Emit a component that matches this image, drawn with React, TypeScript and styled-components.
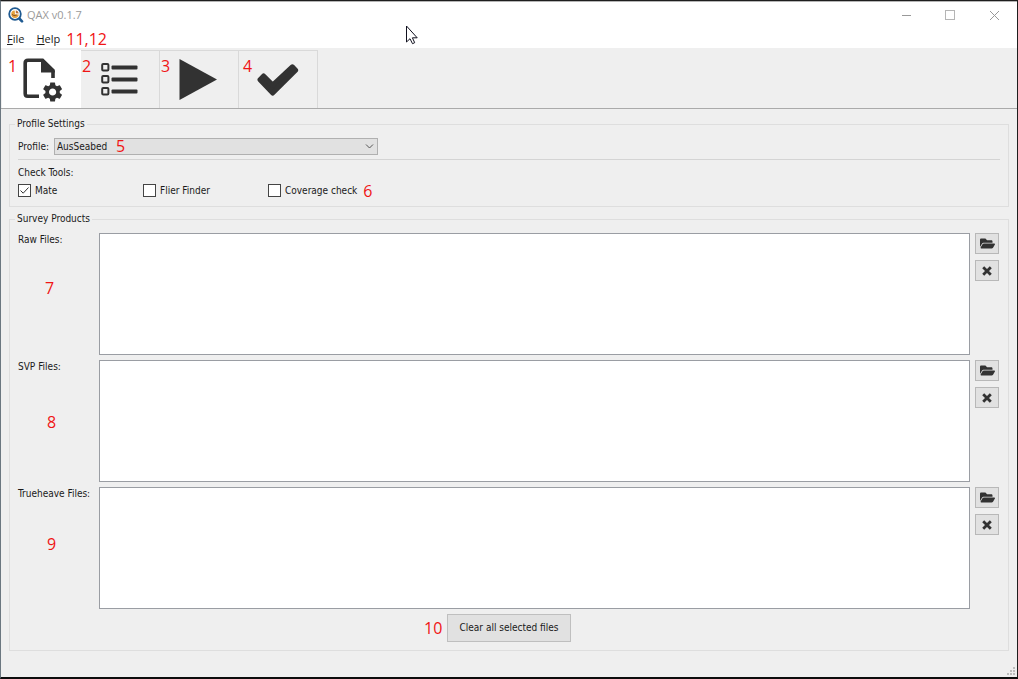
import React from "react";
import styled, { createGlobalStyle } from "styled-components";
import { FaFolderOpen } from "react-icons/fa";

const ink = "#323232";

const GlobalStyle = createGlobalStyle`
  *, *::before, *::after { box-sizing: border-box; }
  body {
    margin: 0;
    background: #efefef;
    color: #1a1a1a;
    font-family: "DejaVu Sans Condensed", "DejaVu Sans", sans-serif;
    font-size: 10px;
    line-height: 12px;
  }
  button, select, textarea, input { font: inherit; color: inherit; }
`;

const Window = styled.div`
  position: relative;
  display: flex;
  flex-direction: column;
  min-height: 100vh;
  background: #efefef;
  border: 1px solid #1e1e1e;
  border-left-color: #6b7780;
  border-bottom-width: 2px;
  border-bottom-color: #0c0c0c;
`;

const TopBar = styled.header`
  display: flex;
  align-items: center;
  height: 29px;
  padding: 0 17px 2px 7px;
  border-top: 1px solid #b5b5b5;
  background: #ffffff;
  color: #9a9a9a;
  font-family: "Open Sans", sans-serif;
  font-size: 11px;
`;

const Title = styled.h1`
  flex: 1;
  margin: 0 0 0 3px;
  font-size: 11px;
  font-weight: 400;
`;

const WindowButtons = styled.div`
  display: flex;
  gap: 32px;
`;

const WindowButton = styled.button`
  display: flex;
  padding: 0;
  border: 0;
  background: none;
`;

const Menu = styled.nav`
  display: flex;
  align-items: center;
  gap: 12px;
  height: 18px;
  padding-left: 6px;
  background: #ffffff;
  font-family: "Open Sans", sans-serif;
  font-size: 11px;
`;

const MenuItem = styled.button`
  padding: 0;
  border: 0;
  background: none;
  line-height: 16px;

  &::first-letter { text-decoration: underline; }
`;

const Marker = styled.span`
  color: #f01414;
  font-family: "Open Sans", sans-serif;
  font-size: 16px;
  line-height: 16px;
`;

const MenuMarker = styled(Marker)`
  margin-left: -6px;
`;

const FloatingMarker = styled(Marker)<{ $left: number; $top: number }>`
  position: absolute;
  left: ${(p) => p.$left}px;
  top: ${(p) => p.$top}px;
  pointer-events: none;
`;

const TabBar = styled.div`
  display: flex;
  height: 61px;
  padding: 2px 0 0 1px;
  border-bottom: 1px solid #aaaaaa;
`;

const Tab = styled.button<{ $active?: boolean }>`
  position: relative;
  display: flex;
  align-items: center;
  justify-content: center;
  width: 79px;
  padding: 0;
  border: 0;
  border-top: 1px solid ${(p) => (p.$active ? "#ffffff" : "#d9d9d9")};
  border-right: 1px solid ${(p) => (p.$active ? "#ffffff" : "#d9d9d9")};
  background: ${(p) => (p.$active ? "#ffffff" : "#efefef")};
`;

const Content = styled.main`
  flex: 1;
  display: flex;
  flex-direction: column;
  gap: 6px;
  padding: 9px 8px 26px;
`;

const Group = styled.fieldset<{ $grow?: boolean }>`
  display: flex;
  flex-direction: column;
  flex: ${(p) => (p.$grow ? "1" : "none")};
  min-width: 0;
  margin: 0;
  padding: ${(p) => (p.$grow ? "8px 8px 7px" : "8px")};
  border: 1px solid #dedede;
`;

const Legend = styled.legend`
  margin-left: -3px;
  padding: 0 2px;
`;

const ProfileRow = styled.div`
  position: relative;
  display: flex;
  align-items: center;
  gap: 5px;
`;

const SelectBox = styled.div`
  position: relative;
  display: flex;
  width: 324px;

  svg {
    position: absolute;
    right: 4px;
    top: 5px;
    pointer-events: none;
  }
`;

const Select = styled.select`
  appearance: none;
  width: 100%;
  height: 17px;
  padding: 0 2px;
  border: 1px solid #b0b0b0;
  border-radius: 0;
  background: #e1e1e1;
`;

const Divider = styled.hr`
  width: 100%;
  margin: 4px 0 7px;
  border: 0;
  border-top: 1px solid #d4d4d4;
`;

const CheckRow = styled.div`
  display: flex;
  align-items: center;
  height: 15px;
  margin-top: 4px;
`;

const CheckLabel = styled.label<{ $last?: boolean }>`
  display: flex;
  align-items: center;
  gap: 4px;
  width: ${(p) => (p.$last ? "auto" : "125px")};
  margin-right: ${(p) => (p.$last ? "6px" : "0")};
`;

const CheckBox = styled.input`
  appearance: none;
  width: 13px;
  height: 13px;
  margin: 0;
  border: 1px solid #444444;
  background: #ffffff;

  &:checked {
    background: #ffffff
      url("data:image/svg+xml,%3Csvg xmlns='http://www.w3.org/2000/svg' viewBox='0 0 11 11'%3E%3Cpath d='M1.5 5.5 4.2 8.2 9.5 2.5' fill='none' stroke='%23333'/%3E%3C/svg%3E");
  }
`;

const FileRows = styled.div`
  display: flex;
  flex-direction: column;
  gap: 5px;
`;

const FileRow = styled.div`
  position: relative;
  display: flex;
  min-height: max(80px, calc((100vh - 313px) / 3));
`;

const FileLabel = styled.label`
  width: 81px;
  padding-top: 1px;
`;

const FileList = styled.textarea`
  flex: 1;
  min-width: 0;
  border: 1px solid #9a9da3;
  border-radius: 0;
  background: #ffffff;
  resize: none;
  outline: none;
`;

const RowButtons = styled.div`
  display: flex;
  flex-direction: column;
  gap: 6px;
  padding: 0 1px 0 5px;
`;

const IconButton = styled.button`
  display: flex;
  align-items: center;
  justify-content: center;
  width: 24px;
  height: 21px;
  padding: 0;
  border: 1px solid #b8b8b8;
  background: #e1e1e1;
  color: ${ink};
`;

const Actions = styled.div`
  display: flex;
  justify-content: center;
  padding-top: 5px;
`;

const ClearWrap = styled.div`
  position: relative;
`;

const ClearButton = styled.button`
  width: 124px;
  height: 28px;
  padding: 0;
  border: 1px solid #bfbfbf;
  background: #e1e1e1;
`;

const Cursor = styled.svg`
  position: absolute;
  left: 404px;
  top: 24px;
  pointer-events: none;
`;

const Grip = styled.svg`
  position: absolute;
  right: 2px;
  bottom: 2px;
`;

const Logo = () => (
  <svg width="16" height="16" viewBox="0 0 16 16" aria-hidden="true">
    <path d="M11.3 11.5 14 14.4" stroke="#1f5a91" strokeWidth="2.6" strokeLinecap="round" />
    <circle cx="7" cy="7" r="5.8" fill="#ffffff" stroke="#1f5a91" strokeWidth="1.8" />
    <path d="M6.7 3.4A3.8 3.8 0 1 0 10.8 7.6L7 7.2Z" fill="#e5a23d" />
    <path d="M7.8 3.2a3.8 3.8 0 0 1 3 3.4l-3-.4Z" fill="#b9713a" />
    <path d="M4 7.4 6 8.6l2.8-.5" fill="none" stroke="#8c5528" />
  </svg>
);

const FileGearIcon = () => (
  <svg width="44" height="46" viewBox="19 57 44 46" aria-hidden="true">
    <path d="M39 96.2H27.8Q25.2 96.2 25.2 93.5V63Q25.2 60.2 28 60.2H42.5L53 70.5V78" fill="none" stroke={ink} strokeWidth="3.6" />
    <path d="M41 60H43.5L54.8 71V72.6H41Z" fill={ink} />
    <g transform="translate(40.6 80)">
      <path
        fill={ink}
        d="M19.14 12.94c.04-.3.06-.61.06-.94 0-.32-.02-.64-.07-.94l2.03-1.58a.49.49 0 0 0 .12-.61l-1.92-3.32a.488.488 0 0 0-.59-.22l-2.39.96c-.5-.38-1.03-.7-1.62-.94l-.36-2.54a.484.484 0 0 0-.48-.41h-3.84c-.24 0-.43.17-.47.41l-.36 2.54c-.59.24-1.13.57-1.62.94l-2.39-.96c-.22-.08-.47 0-.59.22L2.74 8.87c-.12.21-.08.47.12.61l2.03 1.58c-.05.3-.09.63-.09.94s.02.64.07.94l-2.03 1.58a.49.49 0 0 0-.12.61l1.92 3.32c.12.22.37.29.59.22l2.39-.96c.5.38 1.03.7 1.62.94l.36 2.54c.05.24.24.41.48.41h3.84c.24 0 .44-.17.47-.41l.36-2.54c.59-.24 1.13-.56 1.62-.94l2.39.96c.22.08.47 0 .59-.22l1.92-3.32c.12-.22.07-.47-.12-.61l-2.01-1.58zM12 15.6c-1.98 0-3.6-1.62-3.6-3.6s1.62-3.6 3.6-3.6 3.6 1.62 3.6 3.6-1.62 3.6-3.6 3.6z"
      />
    </g>
  </svg>
);

const ListIcon = () => (
  <svg width="38" height="34" viewBox="0 0 38 34" aria-hidden="true">
    {[1, 13, 25].map((y) => (
      <g key={y}>
        <rect x="1.2" y={y} width="6.2" height="6.6" rx="1" fill="none" stroke={ink} strokeWidth="2" />
        <rect x="10.5" y={y + 1.4} width="26" height="4" rx="1" fill={ink} />
      </g>
    ))}
  </svg>
);

const PlayIcon = () => (
  <svg width="40" height="42" viewBox="0 0 40 42" aria-hidden="true">
    <path d="M.5 0 38 20.5 .5 41Z" fill={ink} />
  </svg>
);

const CheckIcon = () => (
  <svg width="42" height="34" viewBox="257 63 42 34" aria-hidden="true">
    <path
      d="M260 79.7 263.6 76 272.7 85 292.3 66.8 295.6 70.3 272.7 93Z"
      fill={ink}
      stroke={ink}
      strokeWidth="5"
      strokeLinejoin="round"
    />
  </svg>
);

const CrossIcon = () => (
  <svg width="10" height="10" viewBox="0 0 10 10" aria-hidden="true">
    <path d="M2.2 2.2 7.8 7.8M7.8 2.2 2.2 7.8" stroke={ink} strokeWidth="2.8" strokeLinecap="square" />
  </svg>
);

const tabs = [
  { name: "Inputs", marker: "1", left: 6, icon: <FileGearIcon /> },
  { name: "Checks", marker: "2", left: 1, icon: <ListIcon /> },
  { name: "Run", marker: "3", left: 1, icon: <PlayIcon /> },
  { name: "Results", marker: "4", left: 4, icon: <CheckIcon /> },
];

const fileRows = [
  { id: "raw", label: "Raw Files:", marker: "7", left: 27, top: 47 },
  { id: "svp", label: "SVP Files:", marker: "8", left: 29, top: 54 },
  { id: "trueheave", label: "Trueheave Files:", marker: "9", left: 29, top: 49 },
];

export default function App() {
  return (
    <>
      <GlobalStyle />
      <Window>
        <TopBar>
          <Logo />
          <Title>QAX v0.1.7</Title>
          <WindowButtons>
            <WindowButton aria-label="Minimize">
              <svg width="12" height="12" viewBox="0 0 12 12">
                <path d="M2 6.5H11" stroke="#999" />
              </svg>
            </WindowButton>
            <WindowButton aria-label="Maximize">
              <svg width="12" height="12" viewBox="0 0 12 12">
                <rect x="1.5" y="1.5" width="9" height="9" fill="none" stroke="#b5b5b5" />
              </svg>
            </WindowButton>
            <WindowButton aria-label="Close">
              <svg width="12" height="12" viewBox="0 0 12 12">
                <path d="M2 2 11 11M11 2 2 11" stroke="#999" />
              </svg>
            </WindowButton>
          </WindowButtons>
        </TopBar>
        <Menu>
          <MenuItem>File</MenuItem>
          <MenuItem>Help</MenuItem>
          <MenuMarker>11,12</MenuMarker>
        </Menu>
        <TabBar role="tablist">
          {tabs.map((tab, i) => (
            <Tab key={tab.name} role="tab" aria-label={tab.name} aria-selected={i === 0} $active={i === 0}>
              {tab.icon}
              <FloatingMarker $left={tab.left} $top={7}>{tab.marker}</FloatingMarker>
            </Tab>
          ))}
        </TabBar>
        <Content>
          <Group>
            <Legend>Profile Settings</Legend>
            <ProfileRow>
              <label htmlFor="profile">Profile:</label>
              <SelectBox>
                <Select id="profile" defaultValue="AusSeabed">
                  <option>AusSeabed</option>
                </Select>
                <svg width="9" height="7" viewBox="0 0 9 7" aria-hidden="true">
                  <path d="M1 1.5 4.5 5 8 1.5" fill="none" stroke="#555" />
                </svg>
                <FloatingMarker $left={62} $top={0}>5</FloatingMarker>
              </SelectBox>
            </ProfileRow>
            <Divider />
            <div>Check Tools:</div>
            <CheckRow>
              <CheckLabel>
                <CheckBox type="checkbox" defaultChecked />
                Mate
              </CheckLabel>
              <CheckLabel>
                <CheckBox type="checkbox" />
                Flier Finder
              </CheckLabel>
              <CheckLabel $last>
                <CheckBox type="checkbox" />
                Coverage check
              </CheckLabel>
              <Marker>6</Marker>
            </CheckRow>
          </Group>
          <Group $grow>
            <Legend>Survey Products</Legend>
            <FileRows>
              {fileRows.map((row) => (
                <FileRow key={row.id}>
                  <FileLabel htmlFor={row.id}>{row.label}</FileLabel>
                  <FileList id={row.id} readOnly />
                  <RowButtons>
                    <IconButton aria-label={`Add ${row.label}`}>
                      <FaFolderOpen size={15} />
                    </IconButton>
                    <IconButton aria-label={`Remove ${row.label}`}>
                      <CrossIcon />
                    </IconButton>
                  </RowButtons>
                  <FloatingMarker $left={row.left} $top={row.top}>{row.marker}</FloatingMarker>
                </FileRow>
              ))}
            </FileRows>
            <Actions>
              <ClearWrap>
                <ClearButton>Clear all selected files</ClearButton>
                <FloatingMarker $left={-23} $top={6}>10</FloatingMarker>
              </ClearWrap>
            </Actions>
          </Group>
        </Content>
        <Cursor width="13" height="20" viewBox="0 0 13 20" aria-hidden="true">
          <path
            d="M1.5 1V17L5 13.7 7.5 18.7 9.7 17.7 7.4 12.8H12.2Z"
            fill="#ffffff"
            stroke="#11111f"
          />
        </Cursor>
        <Grip width="8" height="8" viewBox="0 0 8 8" aria-hidden="true">
          <path d="M6 0h2v2H6zM3 3h2v2H3zM6 3h2v2H6zM0 6h2v2H0zM3 6h2v2H3zM6 6h2v2H6z" fill="#bdbdbd" />
        </Grip>
      </Window>
    </>
  );
}
